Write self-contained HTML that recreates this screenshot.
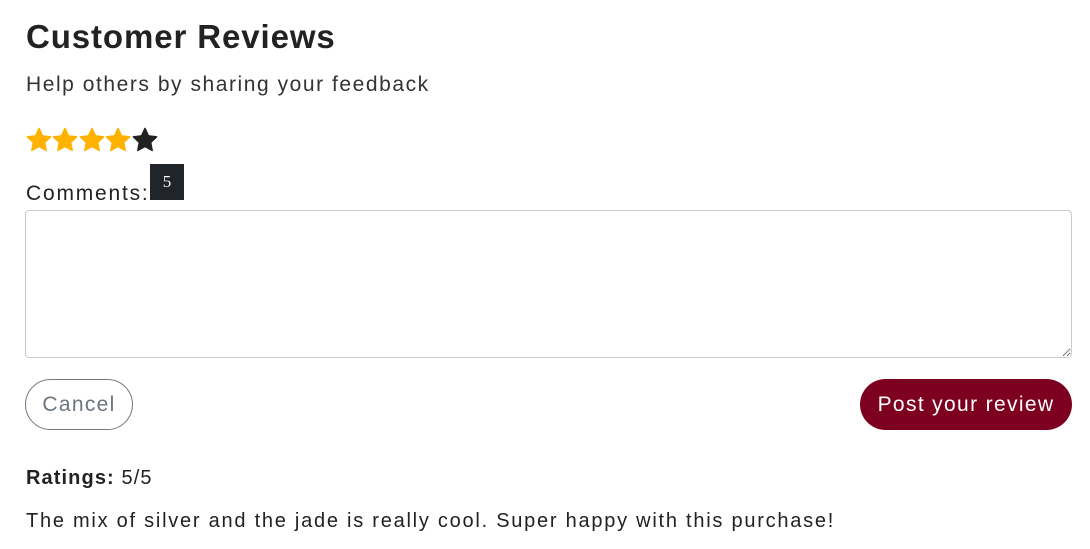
<!DOCTYPE html>
<html><head><meta charset="utf-8"><style>
body{margin:0;width:1090px;height:549px;background:#fff;font-family:"Liberation Sans",sans-serif;color:#212529;position:relative;overflow:hidden}
.a{position:absolute;white-space:nowrap}
h1{margin:0;font-size:33px;font-weight:600;color:#222;letter-spacing:0.9px}
.star{position:absolute;top:126px;width:28px;height:28px}
textarea{position:absolute;left:25px;top:210px;width:1047px;height:148px;box-sizing:border-box;border:1px solid #ccc;border-radius:4px;margin:0}
.btn{position:absolute;top:379px;height:51px;border-radius:26px;box-sizing:border-box;font-size:21px;display:flex;align-items:center;justify-content:center}
</style></head><body>
<h1 class="a" style="left:26px;top:18px">Customer Reviews</h1>
<div class="a" style="left:26px;top:73px;font-size:21px;color:#333;letter-spacing:1.55px">Help others by sharing your feedback</div>
<svg class="star" style="left:25px" viewBox="0 0 24 24"><path fill="#ffb300" stroke="#ffb300" stroke-width="1.2" stroke-linejoin="round" d="M12 2l3 6.4 7 .9-5.1 4.8 1.3 6.9L12 17.6l-6.2 3.4 1.3-6.9L2 9.3l7-.9z"/></svg>
<svg class="star" style="left:51px" viewBox="0 0 24 24"><path fill="#ffb300" stroke="#ffb300" stroke-width="1.2" stroke-linejoin="round" d="M12 2l3 6.4 7 .9-5.1 4.8 1.3 6.9L12 17.6l-6.2 3.4 1.3-6.9L2 9.3l7-.9z"/></svg>
<svg class="star" style="left:78px" viewBox="0 0 24 24"><path fill="#ffb300" stroke="#ffb300" stroke-width="1.2" stroke-linejoin="round" d="M12 2l3 6.4 7 .9-5.1 4.8 1.3 6.9L12 17.6l-6.2 3.4 1.3-6.9L2 9.3l7-.9z"/></svg>
<svg class="star" style="left:104px" viewBox="0 0 24 24"><path fill="#ffb300" stroke="#ffb300" stroke-width="1.2" stroke-linejoin="round" d="M12 2l3 6.4 7 .9-5.1 4.8 1.3 6.9L12 17.6l-6.2 3.4 1.3-6.9L2 9.3l7-.9z"/></svg>
<svg class="star" style="left:131px" viewBox="0 0 24 24"><path fill="#212121" stroke="#212121" stroke-width="1.2" stroke-linejoin="round" d="M12 2l3 6.4 7 .9-5.1 4.8 1.3 6.9L12 17.6l-6.2 3.4 1.3-6.9L2 9.3l7-.9z"/></svg>
<div class="a" style="left:26px;top:182px;font-size:21px;color:#222;letter-spacing:1.8px">Comments:</div>
<div class="a" style="left:150px;top:164px;width:34px;height:36px;background:#212529;color:#fff;font-family:'Liberation Serif',serif;font-size:17px;text-align:center;line-height:36px">5</div>
<textarea></textarea>
<div class="btn" style="left:25px;width:108px;border:1px solid #777;color:#6c757d;letter-spacing:1.3px">Cancel</div>
<div class="btn" style="left:860px;width:212px;background:#7d0020;color:#fff;letter-spacing:1.35px">Post your review</div>
<div class="a" style="left:26px;top:467px;font-size:20px;color:#222;letter-spacing:1.1px"><b>Ratings:</b> 5/5</div>
<div class="a" style="left:26px;top:510px;font-size:20px;color:#222;letter-spacing:1.75px">The mix of silver and the jade is really cool. Super happy with this purchase!</div>
</body></html>
